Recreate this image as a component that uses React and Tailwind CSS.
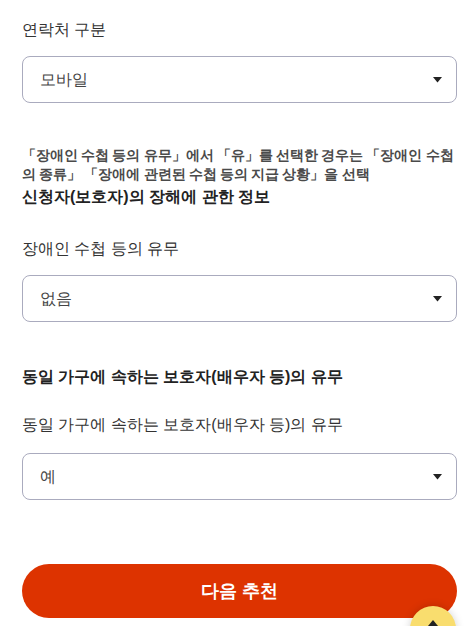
import { useState } from "react";

const FONT = { fontFamily: '"Liberation Sans", sans-serif' };

function SelectBox({ value }) {
  return (
    <div className="flex h-[47px] items-center justify-between rounded-lg border border-[#aaabbe] bg-white pl-[17px] pr-[14px]">
      <span className="text-[16px] text-[#444]">{value}</span>
      <svg width="9" height="6" viewBox="0 0 9 6">
        <path d="M0 0h9L4.5 5.5z" fill="#222" />
      </svg>
    </div>
  );
}

export default function App() {
  const [contact] = useState("모바일");

  return (
    <div className="relative min-h-screen bg-white text-[#333]" style={FONT}>
      <div className="pl-[22px] pr-[15px] pt-[19px]">
        {/* 연락처 */}
        <p className="text-[16px] leading-[22px]">연락처 구분</p>
        <div className="mt-[15px]">
          <SelectBox value={contact} />
        </div>

        {/* 안내 문구 */}
        <p className="mt-[43px] text-[14px] leading-[19px] font-bold text-[#4a4a4a] [word-spacing:-0.7px]">
          「장애인 수첩 등의 유무」에서 「유」를 선택한 경우는 「장애인 수첩의 종류」 「장애에 관련된 수첩 등의 지급 상황」을 선택
        </p>
        <h2 className="mt-[2px] text-[16px] leading-[22px] font-bold text-[#222]">
          신청자(보호자)의 장해에 관한 정보
        </h2>

        <p className="mt-[30px] text-[16px] leading-[22px]">장애인 수첩 등의 유무</p>
        <div className="mt-[15px]">
          <SelectBox value="없음" />
        </div>

        <h2 className="mt-[44px] text-[16px] leading-[22px] font-bold text-[#222]">
          동일 가구에 속하는 보호자(배우자 등)의 유무
        </h2>

        <p className="mt-[26px] text-[16px] leading-[22px]">동일 가구에 속하는 보호자(배우자 등)의 유무</p>
        <div className="mt-[17px]">
          <SelectBox value="예" />
        </div>

        <button className="mt-[64px] flex h-[54px] w-full items-center justify-center rounded-full bg-[#dd3300] text-[18px] font-bold text-white">
          다음 추천
        </button>
        <div className="h-10" />
      </div>

      {/* 맨 위로 버튼 */}
      <div className="fixed left-[410px] top-[606px] flex h-[46px] w-[46px] justify-center rounded-full bg-[#f9dd6e] pt-[14px] shadow-[0_0_8px_rgba(0,0,0,0.18)]">
        <svg width="10" height="6" viewBox="0 0 10 6">
          <path d="M5 0L10 6H0z" fill="#222" />
        </svg>
      </div>
    </div>
  );
}
